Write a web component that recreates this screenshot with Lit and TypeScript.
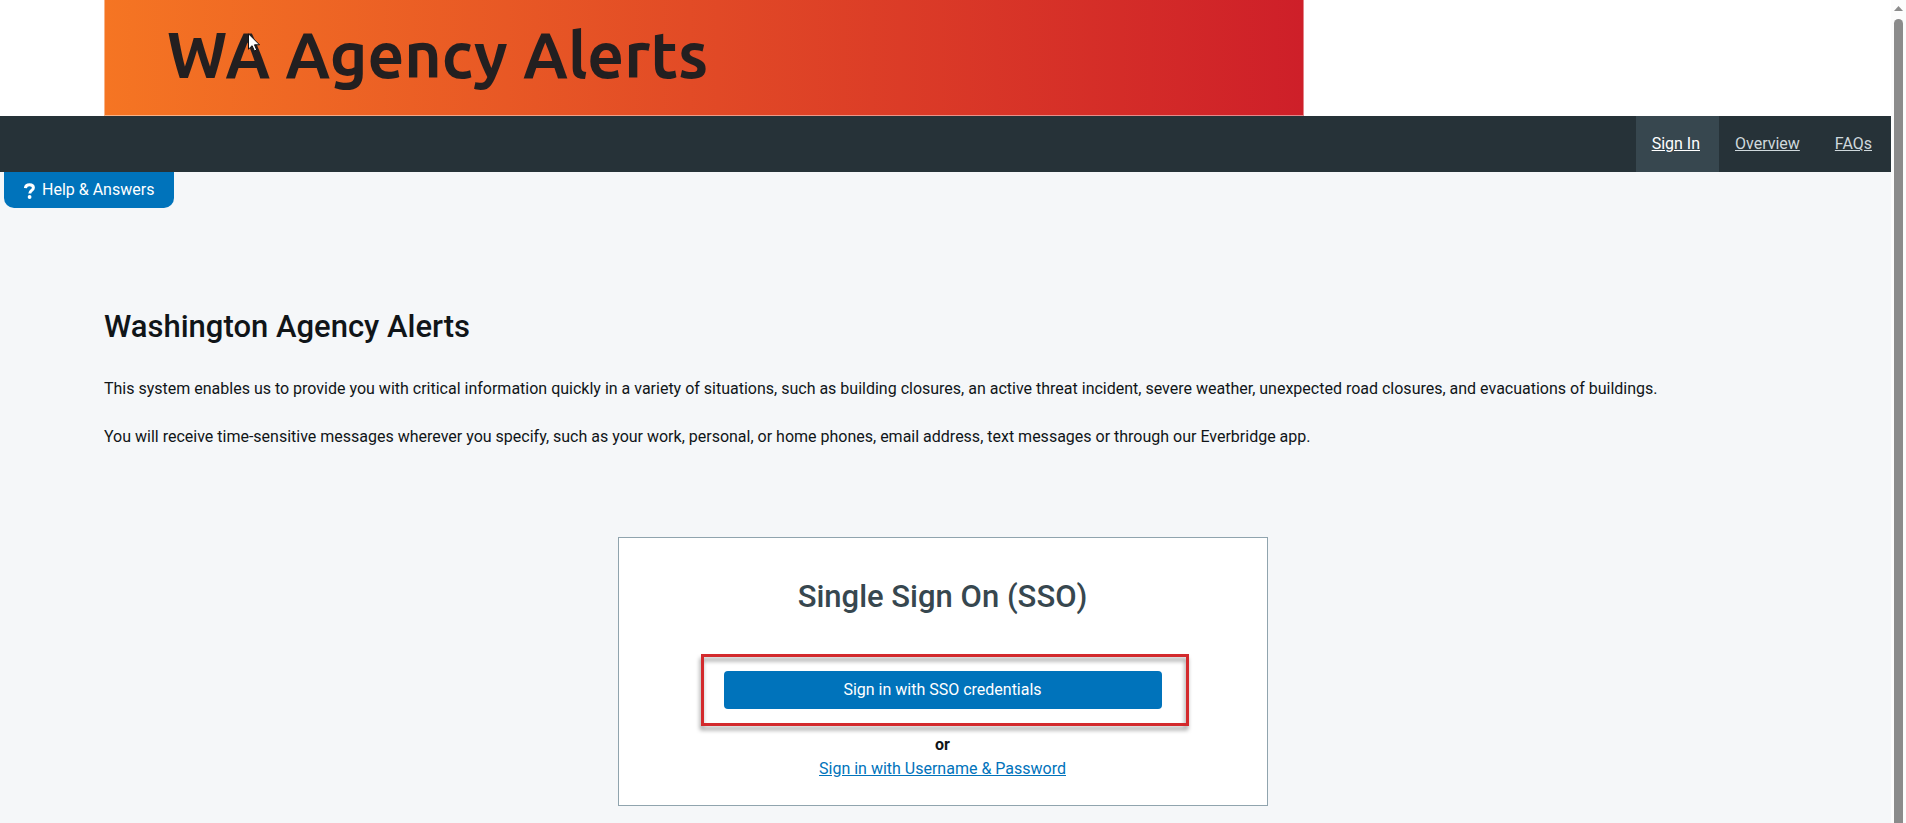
import { LitElement, html, css } from "lit";
import { customElement, property } from "lit/decorators.js";

interface NavItem {
  label: string;
  href: string;
}

const NAV_ITEMS: NavItem[] = [
  { label: "Sign In", href: "#sign-in" },
  { label: "Overview", href: "#overview" },
  { label: "FAQs", href: "#faqs" },
];

@customElement("site-banner")
export class SiteBanner extends LitElement {
  static styles = css`
    :host {
      display: block;
      background: #fff;
      padding-left: 104px;
    }
    .banner {
      position: relative;
      box-sizing: border-box;
      max-width: 1200px;
      height: 116px;
      padding: 0 62px 8px;
      display: flex;
      align-items: center;
      background: linear-gradient(90deg, #f57523, #ce1f29);
      border: solid rgba(255, 255, 255, 0.45);
      border-width: 0 1px 1px;
      background-origin: border-box;
      color: #231f20;
      font: 700 64px/80px "Ubuntu", "Noto Sans", sans-serif;
      white-space: nowrap;
    }
    .pointer {
      position: absolute;
      left: 143px;
      top: 33px;
      width: 12px;
      height: 19px;
    }
  `;

  render() {
    return html`
      <header class="banner">
        <span>WA Agency Alerts</span>
        <svg class="pointer" viewBox="0 0 12 19" aria-hidden="true">
          <path
            d="M.5 .8v15.4l3.6-3.5 2.3 5.3 2.3-1-2.2-5.2h5z"
            fill="#fff"
            stroke="#111"
          />
        </svg>
      </header>
    `;
  }
}

@customElement("site-nav")
export class SiteNav extends LitElement {
  @property() current = "";

  static styles = css`
    :host {
      display: block;
      background: #263238;
    }
    .nav {
      display: flex;
      justify-content: flex-end;
    }
    .link {
      padding: 16px 19px 16px 16px;
      font-size: 16px;
      line-height: 24px;
      color: #cfd8dc;
      text-decoration: underline;
    }
    .current {
      background: #37474f;
      color: #fff;
    }
  `;

  render() {
    return html`
      <nav class="nav">
        ${NAV_ITEMS.map(
          (item) => html`<a
            class="link ${item.label === this.current ? "current" : ""}"
            href=${item.href}
            >${item.label}</a
          >`
        )}
      </nav>
    `;
  }
}

@customElement("sign-in-card")
export class SignInCard extends LitElement {
  static styles = css`
    :host {
      display: block;
      box-sizing: border-box;
      width: 100%;
      max-width: 650px;
      padding: 37px 105px 24px;
      background: #fff;
      border: 1px solid #90a4ae;
      text-align: center;
    }
    .title {
      margin: 0;
      font-size: 31px;
      font-weight: 500;
      line-height: 44px;
      color: #37474f;
    }
    .action {
      position: relative;
      margin-top: 52px;
    }
    .button {
      display: block;
      width: 100%;
      height: 38px;
      padding: 0;
      border: 0;
      border-radius: 4px;
      background: #0073bb;
      color: #fff;
      font: 400 16px/24px Roboto, sans-serif;
    }
    .marker {
      position: absolute;
      inset: -17px -27px -17px -23px;
      border: 3px solid #d32a2d;
      filter: drop-shadow(-1px 4px 2px rgba(0, 0, 0, 0.4));
      pointer-events: none;
    }
    .or {
      margin: 24px 0 0;
      font-weight: 700;
      line-height: 24px;
    }
    .alt {
      display: inline-block;
      line-height: 24px;
      color: #0073bb;
    }
  `;

  render() {
    return html`
      <h2 class="title">Single Sign On (SSO)</h2>
      <div class="action">
        <button class="button" type="button">Sign in with SSO credentials</button>
        <div class="marker"></div>
      </div>
      <p class="or">or</p>
      <a class="alt" href="#password">Sign in with Username &amp; Password</a>
    `;
  }
}

@customElement("app-root")
export class AppRoot extends LitElement {
  static styles = css`
    :host {
      display: grid;
      grid-template-columns: minmax(0, 1fr) 15px;
      min-height: 100vh;
      background: #f5f7f9;
      color: #101518;
      font: 400 16px/24px Roboto, sans-serif;
    }
    .help {
      display: flex;
      align-items: center;
      gap: 7px;
      height: 36px;
      margin-left: 4px;
      padding: 0 20px;
      border: 0;
      border-radius: 0 0 10px 10px;
      background: #0073bb;
      color: #fff;
      font: 400 16px/24px Roboto, sans-serif;
    }
    .help-icon {
      width: 11px;
      height: 16px;
      margin-top: 2px;
    }
    .content {
      padding: 97px 110px 16px 104px;
    }
    .heading {
      margin: 0 0 28px;
      font-size: 31px;
      font-weight: 500;
      line-height: 44px;
    }
    .text {
      margin: 0 0 24px;
    }
    .card-row {
      display: flex;
      justify-content: center;
      padding-top: 64px;
    }
    .scroll {
      display: flex;
      flex-direction: column;
      align-items: center;
      gap: 8px;
      padding-top: 6px;
      background: #fcfcfc;
    }
    .arrow {
      width: 9px;
      height: 5px;
    }
    .thumb {
      flex: 1;
      width: 9px;
      border-radius: 5px 5px 0 0;
      background: #8b8b8b;
    }
  `;

  render() {
    return html`
      <div>
        <site-banner></site-banner>
        <site-nav current="Sign In"></site-nav>
        <button class="help" type="button">
          <svg class="help-icon" viewBox="0 0 11 16" aria-hidden="true">
            <path
              d="M1.4 5.2C1.6 3 3.200 1.700 5.500 1.700c2.400 0 3.900 1.200 3.900 3 0 2.700-3.600 2.700-3.600 5.800"
              fill="none"
              stroke="#fff"
              stroke-width="3"
            />
            <circle cx="5.600" cy="14" r="1.900" fill="#fff" />
          </svg>
          <span>Help &amp; Answers</span>
        </button>
        <main class="content">
          <h1 class="heading">Washington Agency Alerts</h1>
          <p class="text">
            This system enables us to provide you with critical information
            quickly in a variety of situations, such as building closures, an
            active threat incident, severe weather, unexpected road closures,
            and evacuations of buildings.
          </p>
          <p class="text">
            You will receive time-sensitive messages wherever you specify, such
            as your work, personal, or home phones, email address, text messages
            or through our Everbridge app.
          </p>
          <div class="card-row">
            <sign-in-card></sign-in-card>
          </div>
        </main>
      </div>
      <div class="scroll" aria-hidden="true">
        <svg class="arrow" viewBox="0 0 9 5">
          <path d="M4.500 0 9 5H0z" fill="#8b8b8b" />
        </svg>
        <div class="thumb"></div>
      </div>
    `;
  }
}
